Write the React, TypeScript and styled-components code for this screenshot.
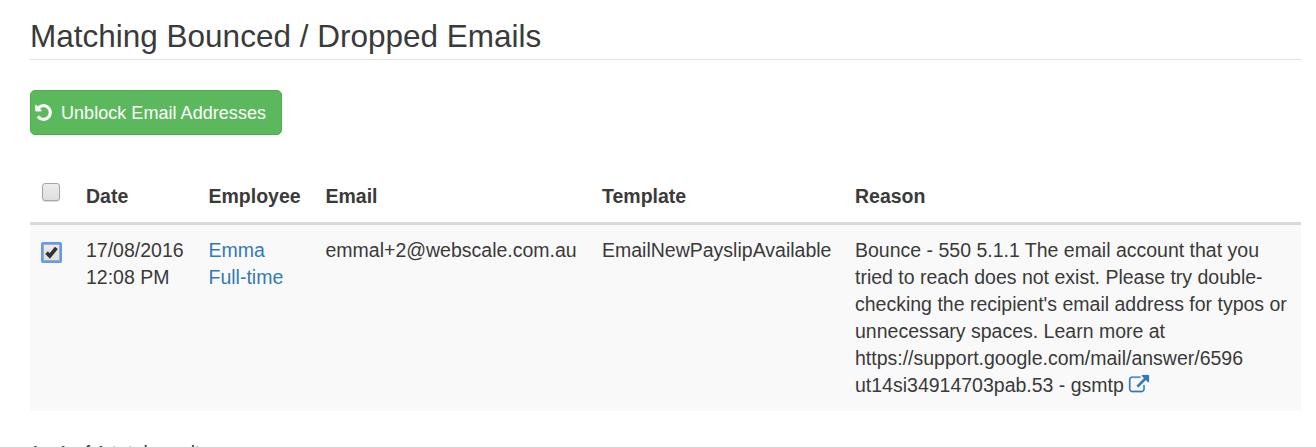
import React from "react";
import styled, { createGlobalStyle } from "styled-components";

const GlobalStyle = createGlobalStyle`
  * { box-sizing: border-box; }
  html, body { margin: 0; background: #fff; }
  body {
    height: 447px;
    overflow: hidden;
    font-family: "Liberation Sans", Arial, sans-serif;
    font-size: 19.5px;
    line-height: 27px;
    color: #3a3a3a;
  }
`;

const Page = styled.main`
  width: 1316px;
  height: 447px;
  overflow: hidden;
  padding: 16px 15px 0 30px;
`;

const Heading = styled.h2`
  margin: 0 -1px 30px 0;
  height: 44px;
  font-size: 31.5px;
  font-weight: 400;
  line-height: 40px;
  border-bottom: 1px solid #e2e2e2;
`;

const UnblockButton = styled.button`
  display: flex;
  align-items: center;
  width: 252px;
  height: 45px;
  padding: 0 0 0 3px;
  border: 1px solid #4cae4c;
  border-radius: 5px;
  background: #5cb85c;
  color: #fff;
  font: inherit;
  font-size: 18px;
  letter-spacing: 0.04px;
  white-space: nowrap;
`;

const ButtonLabel = styled.span`
  padding-top: 2px;
`;

const UndoGlyph = styled.svg`
  width: 19px;
  height: 19px;
  margin-right: 8px;
  fill: currentColor;
  stroke: currentColor;
  stroke-width: 40;
`;

const Table = styled.table`
  width: 1271px;
  margin-top: 34px;
  table-layout: fixed;
  border-collapse: separate;
  border-spacing: 0;
`;

const HeadCell = styled.th`
  height: 56px;
  padding: 14px 0 0 11px;
  border-bottom: 3px solid #d9d9d9;
  text-align: left;
  vertical-align: top;
  font-size: 19.5px;
`;

const Cell = styled.td`
  height: 186px;
  padding: 12px 0 0 11px;
  background: #f9f9f9;
  vertical-align: top;
  white-space: nowrap;
`;

const Check = styled.span<{ $focused?: boolean }>`
  display: flex;
  width: ${(p) => (p.$focused ? 21 : 18)}px;
  height: ${(p) => (p.$focused ? 21 : 18)}px;
  margin: ${(p) => (p.$focused ? "5px 0 0 0" : "0 0 0 1px")};
  border: ${(p) => (p.$focused ? "2px solid #5b9bfa" : "1px solid #a5a5a5")};
  border-radius: ${(p) => (p.$focused ? 2 : 3)}px;
  background: linear-gradient(#ececec, #dedede);
  box-shadow: ${(p) => (p.$focused ? "inset 0 0 0 1px #a9a9a9" : "0 1px 1px #ddd")};
`;

const Link = styled.a`
  color: #337ab7;
  text-decoration: none;
`;

const ExternalGlyph = styled.svg`
  width: 20px;
  height: 20px;
  vertical-align: -3px;
  fill: currentColor;
  stroke: currentColor;
  stroke-width: 20;
  overflow: visible;
`;

const Summary = styled.p`
  margin: 29px 0 0;
  font-size: 19.3px;
`;

const columns = [
  { label: "Date", width: 122.5 },
  { label: "Employee", width: 117 },
  { label: "Email", width: 276.5 },
  { label: "Template", width: 253 },
  { label: "Reason", width: 457 },
];

export default function App() {
  return (
    <>
      <GlobalStyle />
      <Page>
        <Heading>Matching Bounced / Dropped Emails</Heading>
        <UnblockButton type="button">
          <UndoGlyph viewBox="0 0 1792 1792" aria-hidden="true">
            <path d="M1664 896q0 156-61 298t-164 245-245 164-298 61q-172 0-327-72.5t-264-204.5q-7-10-6.5-22.5t8.5-20.5l137-138q10-9 25-9 16 2 23 12 73 95 179 147t225 52q104 0 198.5-40.5t163.5-109.5 109.5-163.5 40.5-198.5-40.5-198.5-109.5-163.5-163.5-109.5-198.5-40.5q-98 0-188 35.5t-160 101.5l137 138q31 30 14 69-17 40-59 40h-448q-26 0-45-19t-19-45v-448q0-42 40-59 39-17 69 14l130 129q107-101 244.5-156.5t284.5-55.5q156 0 298 61t245 164 164 245 61 298z" />
          </UndoGlyph>
          <ButtonLabel>Unblock Email Addresses</ButtonLabel>
        </UnblockButton>
        <Table>
          <colgroup>
            <col style={{ width: 45 }} />
            {columns.map((c) => (
              <col key={c.label} style={{ width: c.width }} />
            ))}
          </colgroup>
          <thead>
            <tr>
              <HeadCell>
                <Check role="checkbox" aria-checked="false" />
              </HeadCell>
              {columns.map((c) => (
                <HeadCell key={c.label}>{c.label}</HeadCell>
              ))}
            </tr>
          </thead>
          <tbody>
            <tr>
              <Cell>
                <Check $focused role="checkbox" aria-checked="true">
                  <svg width="17" height="17" viewBox="0 0 17 17">
                    <path d="M3.5 8.6l3.3 3.4 6.6-8.2" fill="none" stroke="#333" strokeWidth="3.7" />
                  </svg>
                </Check>
              </Cell>
              <Cell>
                17/08/2016
                <br />
                12:08 PM
              </Cell>
              <Cell>
                <Link>
                  Emma
                  <br />
                  Full-time
                </Link>
              </Cell>
              <Cell>emmal+2@webscale.com.au</Cell>
              <Cell>EmailNewPayslipAvailable</Cell>
              <Cell>
                Bounce - 550 5.1.1 The email account that you
                <br />
                tried to reach does not exist. Please try double-
                <br />
                checking the recipient's email address for typos or
                <br />
                unnecessary spaces. Learn more at
                <br />
                https://support.google.com/mail/answer/6596
                <br />
                ut14si34914703pab.53 - gsmtp{" "}
                <Link>
                  <ExternalGlyph viewBox="0 0 1792 1792" aria-hidden="true">
                    <path d="M1408 928v320q0 119-84.5 203.5t-203.5 84.5h-832q-119 0-203.5-84.5t-84.5-203.5v-832q0-119 84.5-203.5t203.5-84.5h704q14 0 23 9t9 23v64q0 14-9 23t-23 9h-704q-66 0-113 47t-47 113v832q0 66 47 113t113 47h832q66 0 113-47t47-113v-320q0-14 9-23t23-9h64q14 0 23 9t9 23zm384-864v512q0 26-19 45t-45 19-45-19l-176-176-652 652q-10 10-23 10t-23-10l-114-114q-10-10-10-23t10-23l652-652-176-176q-19-19-19-45t19-45 45-19h512q26 0 45 19t19 45z" />
                  </ExternalGlyph>
                </Link>
              </Cell>
            </tr>
          </tbody>
        </Table>
        <Summary>1 - 1 of 1 total results</Summary>
      </Page>
    </>
  );
}
